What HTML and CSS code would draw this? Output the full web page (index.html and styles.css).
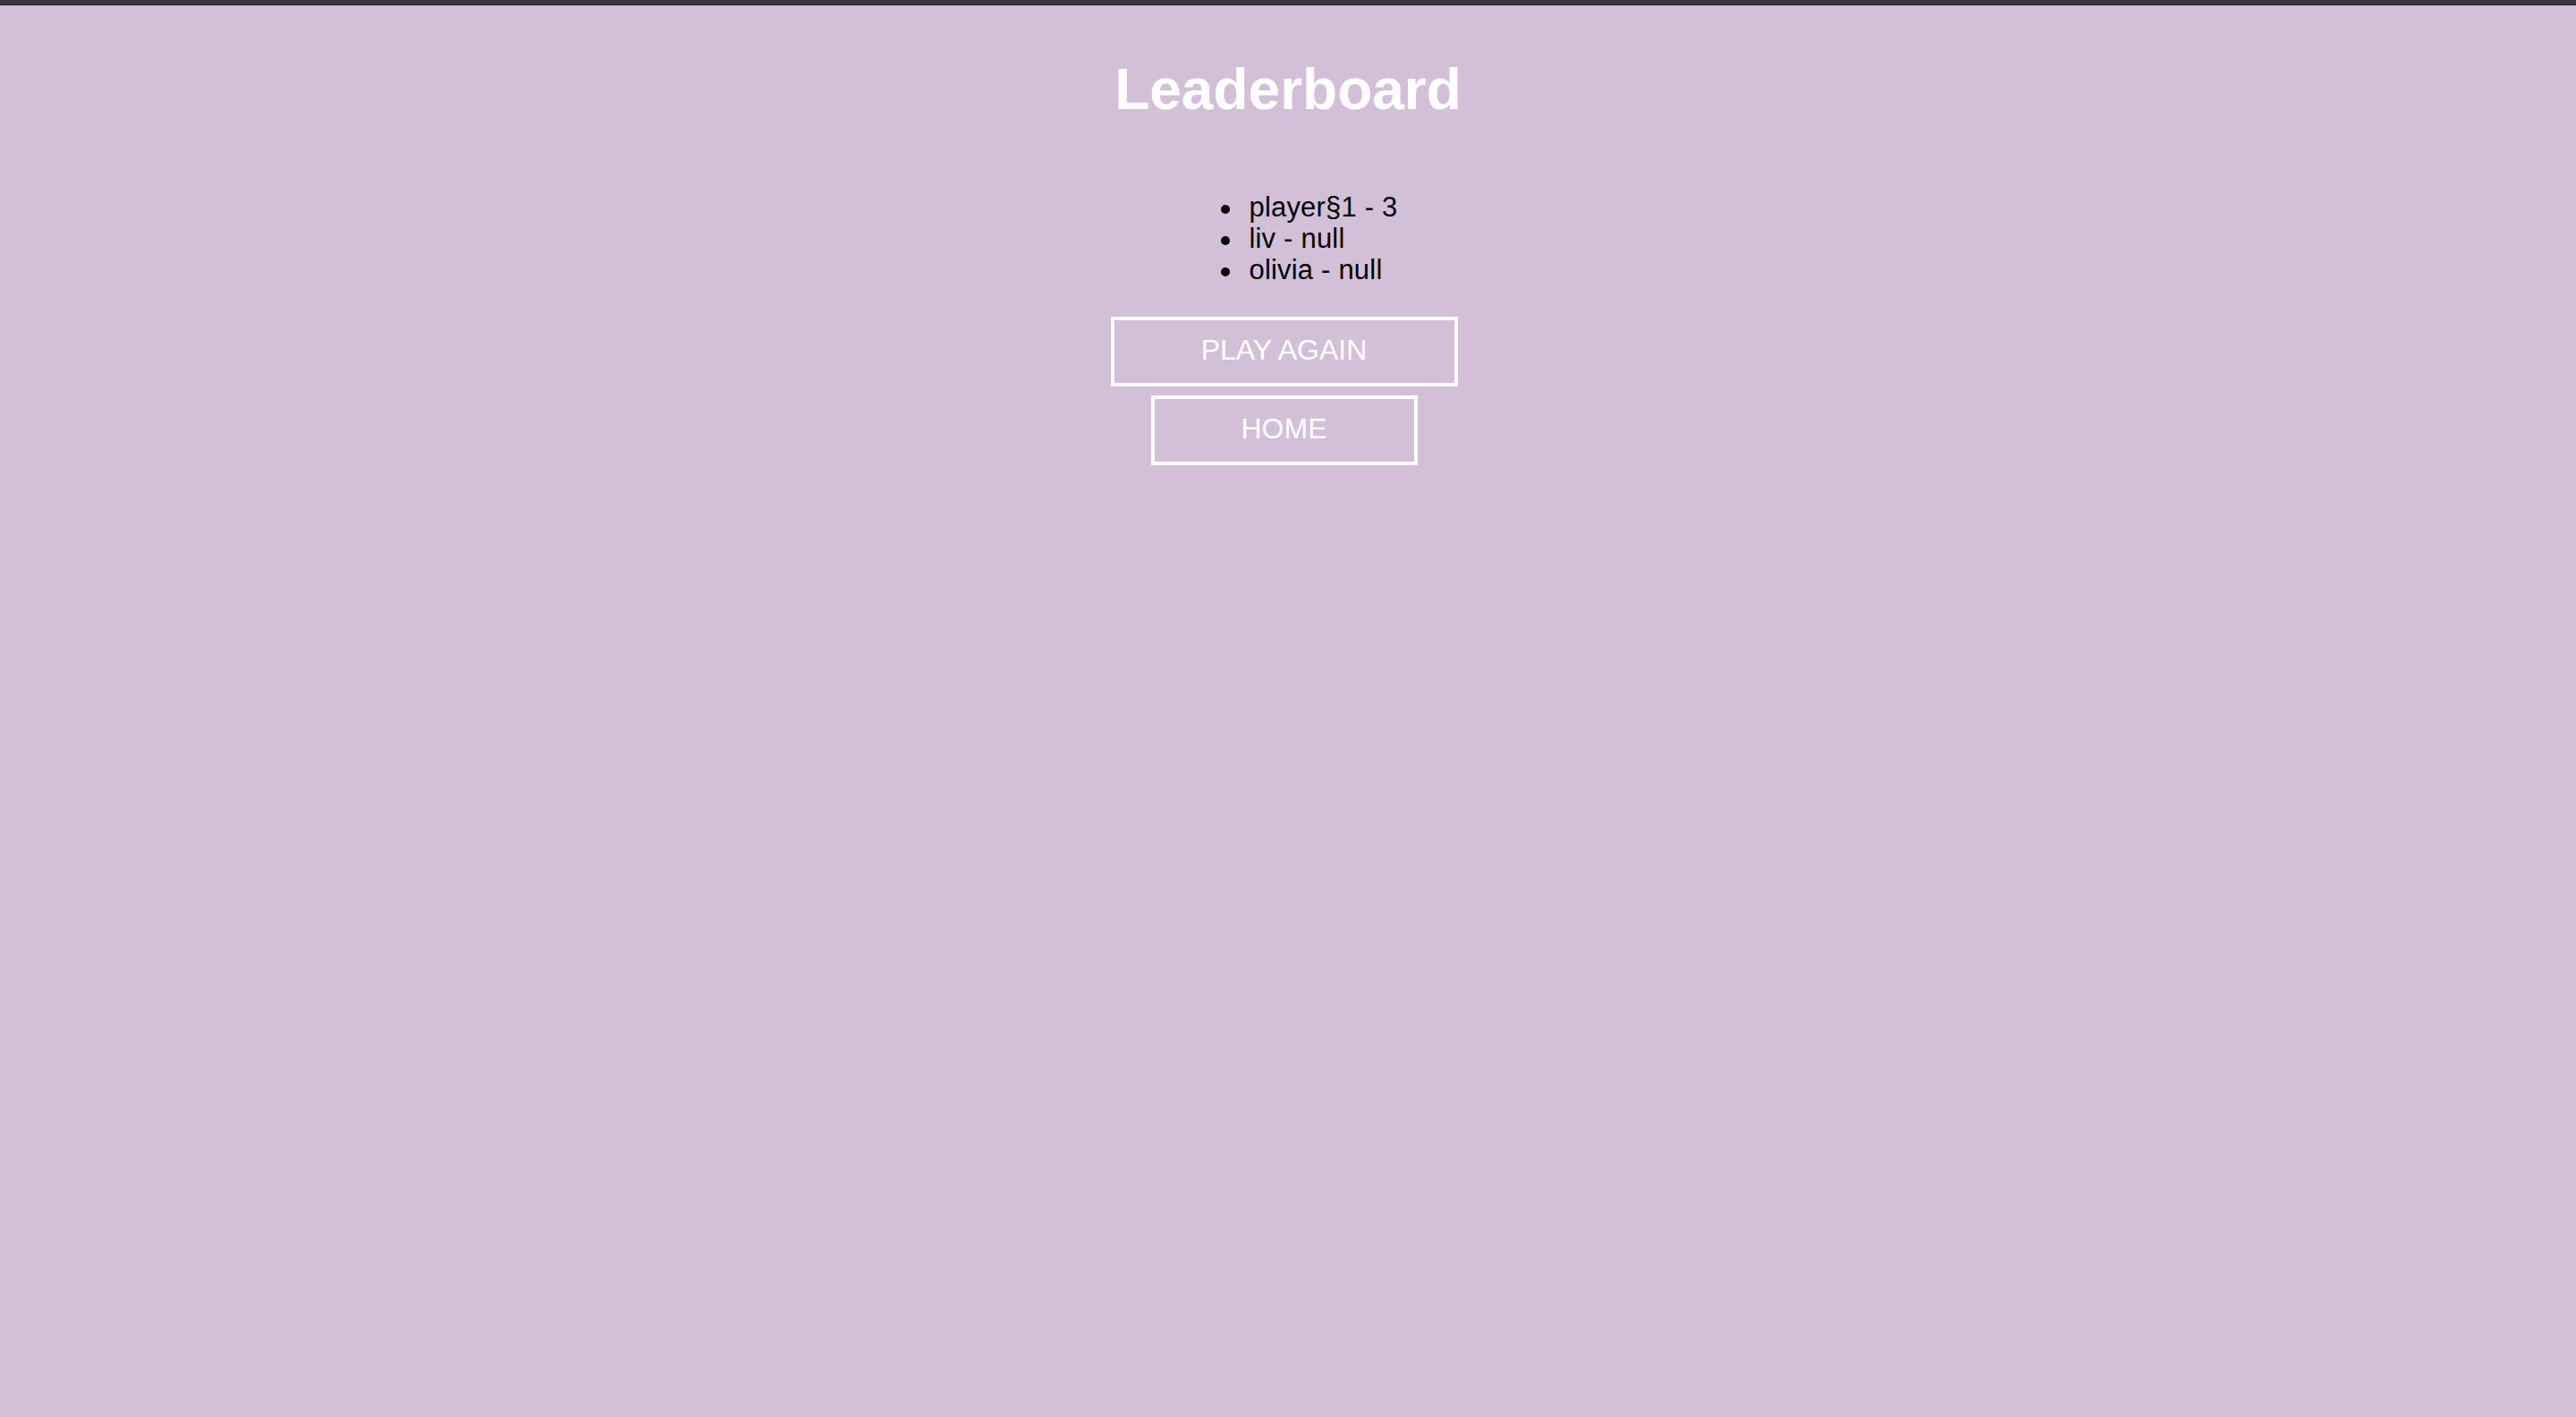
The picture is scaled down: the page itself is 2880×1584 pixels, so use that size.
FILE: index.html
```html
<!DOCTYPE html>
<html lang="en">
<head>
<meta charset="utf-8">
<title>Leaderboard</title>
<link rel="stylesheet" href="styles.css">
</head>
<body>
<div class="topbar"></div>
<main class="page">
  <h1 class="title">Leaderboard</h1>
  <ul class="scores">
    <li>player§1 - 3</li>
    <li>liv - null</li>
    <li>olivia - null</li>
  </ul>
  <div class="actions">
    <button class="btn btn-play">PLAY AGAIN</button>
    <button class="btn btn-home">HOME</button>
  </div>
</main>
</body>
</html>
```
FILE: styles.css
```css
html, body {
  margin: 0;
  padding: 0;
}
body {
  background: #d3bfd7;
  min-height: 1584px;
  font-family: "Liberation Sans", Arial, sans-serif;
}
.topbar {
  height: 5px;
  background: #36383b;
  border-bottom: 1px solid #212225;
}
.page {
  display: flex;
  flex-direction: column;
  align-items: center;
}
.title {
  margin: 57px 0 0 0;
  font-size: 64px;
  line-height: 74px;
  font-weight: bold;
  color: #ffffff;
}
.scores {
  margin: 77px 0 0 0;
  padding: 0 0 0 48px;
  list-style: none;
  font-size: 31px;
  line-height: 35px;
  letter-spacing: 0.2px;
  color: #000000;
}
.scores li::before {
  content: "";
  display: inline-block;
  width: 10px;
  height: 10px;
  margin-right: 21px;
  border-radius: 50%;
  background: #000000;
  vertical-align: middle;
}
.actions {
  margin-top: 35px;
  display: flex;
  flex-direction: column;
  align-items: center;
  gap: 10px;
  padding-right: 9px;
}
.btn {
  box-sizing: border-box;
  height: 78px;
  padding: 15px 0 19px 0;
  background: transparent;
  border: 4px solid #ffffff;
  border-radius: 0;
  color: #ffffff;
  font-family: "Liberation Sans", Arial, sans-serif;
  font-size: 32px;
  line-height: 36px;
  text-align: center;
  cursor: pointer;
}
.btn-play {
  width: 388px;
}
.btn-home {
  width: 298px;
}
```
